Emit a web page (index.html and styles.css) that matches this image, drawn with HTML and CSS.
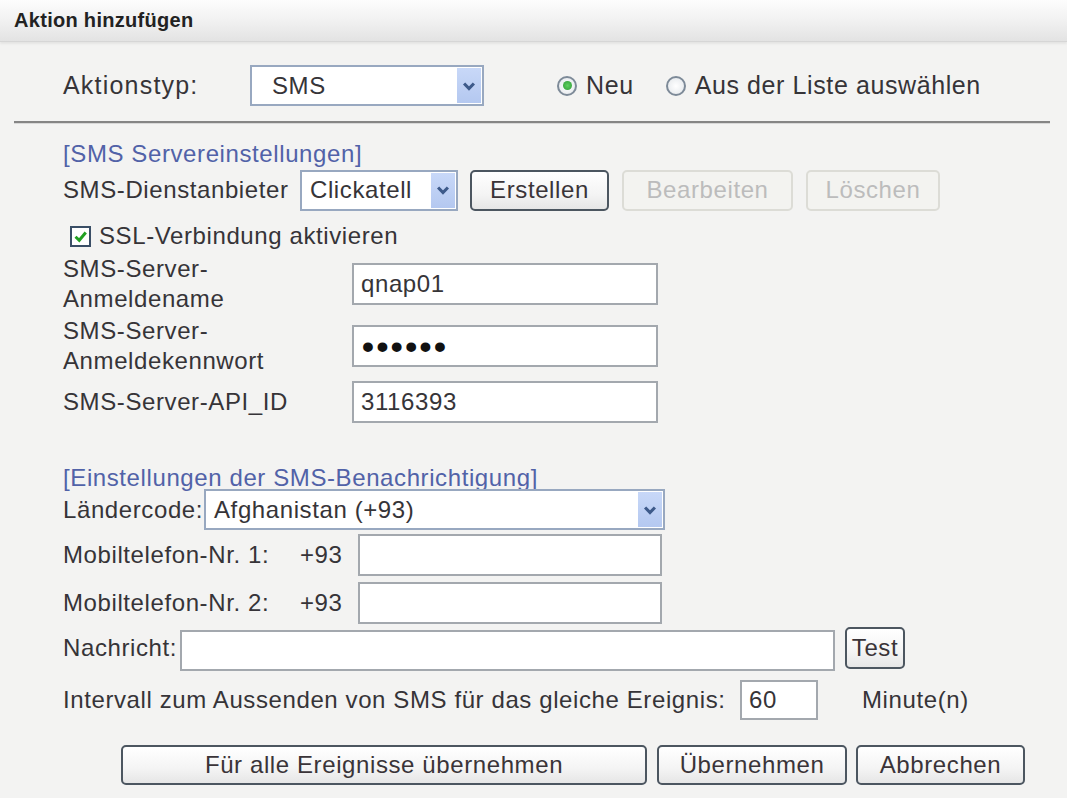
FILE: index.html
```html
<!DOCTYPE html>
<html lang="de">
<head>
<meta charset="utf-8">
<title>Aktion hinzufügen</title>
<link rel="stylesheet" href="styles.css">
</head>
<body>
<div class="header">Aktion hinzufügen</div>
<div class="panel">
  <div class="inner">
    <div class="row row-type">
      <span class="lbl-type">Aktionstyp:</span>
      <div class="select sel-type"><span class="sel-text">SMS</span><span class="sel-arrow"><svg viewBox="0 0 10 10" width="14" height="14"><path d="M1.5 3.2 L5 6.8 L8.5 3.2" fill="none" stroke="#3d5a8a" stroke-width="2.2"/></svg></span></div>
      <div class="radios">
        <span class="radio checked"></span><span class="radio-lbl">Neu</span>
        <span class="radio"></span><span class="radio-lbl">Aus der Liste auswählen</span>
      </div>
    </div>
  </div>
  <div class="hr"></div>
  <div class="inner">
    <div class="section-title t1">[SMS Servereinstellungen]</div>
    <div class="row row-prov">
      <span class="lbl-prov">SMS-Dienstanbieter</span>
      <div class="select sel-prov"><span class="sel-text">Clickatell</span><span class="sel-arrow"><svg viewBox="0 0 10 10" width="14" height="14"><path d="M1.5 3.2 L5 6.8 L8.5 3.2" fill="none" stroke="#3d5a8a" stroke-width="2.2"/></svg></span></div>
      <button class="btn b-create">Erstellen</button>
      <button class="btn disabled b-edit">Bearbeiten</button>
      <button class="btn disabled b-del">Löschen</button>
    </div>
    <div class="row row-ssl">
      <span class="check"><svg viewBox="0 0 12 12" width="15" height="15"><path d="M2 6.2 L5 9 L10.2 2.8" fill="none" stroke="#22a022" stroke-width="2.4"/></svg></span>
      <span>SSL-Verbindung aktivieren</span>
    </div>
    <div class="field f1">
      <span class="flbl">SMS-Server-<br>Anmeldename</span>
      <div class="input">qnap01</div>
    </div>
    <div class="field f2">
      <span class="flbl">SMS-Server-<br>Anmeldekennwort</span>
      <div class="input pw">••••••</div>
    </div>
    <div class="field f3">
      <span class="flbl">SMS-Server-API_ID</span>
      <div class="input">3116393</div>
    </div>

    <div class="section-title t2">[Einstellungen der SMS-Benachrichtigung]</div>
    <div class="row row-country">
      <span class="lbl-country">Ländercode:</span>
      <div class="select sel-country"><span class="sel-text">Afghanistan (+93)</span><span class="sel-arrow"><svg viewBox="0 0 10 10" width="14" height="14"><path d="M1.5 3.2 L5 6.8 L8.5 3.2" fill="none" stroke="#3d5a8a" stroke-width="2.2"/></svg></span></div>
    </div>
    <div class="row row-mob m1">
      <span class="lbl-mob">Mobiltelefon-Nr. 1:</span>
      <span class="prefix">+93</span>
      <div class="input in-mob"></div>
    </div>
    <div class="row row-mob m2">
      <span class="lbl-mob">Mobiltelefon-Nr. 2:</span>
      <span class="prefix">+93</span>
      <div class="input in-mob"></div>
    </div>
    <div class="row row-msg">
      <span class="lbl-msg">Nachricht:</span>
      <div class="input in-msg"></div>
      <button class="btn b-test">Test</button>
    </div>
    <div class="row row-int">
      <span class="lbl-int">Intervall zum Aussenden von SMS für das gleiche Ereignis:</span>
      <div class="input in-int">60</div>
      <span class="unit">Minute(n)</span>
    </div>
  </div>
  <div class="actions">
    <button class="btn b-all">Für alle Ereignisse übernehmen</button>
    <button class="btn b-apply">Übernehmen</button>
    <button class="btn b-cancel">Abbrechen</button>
  </div>
</div>
</body>
</html>
```

FILE: styles.css
```css
html, body {
  margin: 0;
  padding: 0;
}
body {
  background: #f3f3f2;
  font-family: "Liberation Sans", Arial, sans-serif;
  font-size: 24px;
  letter-spacing: 0.6px;
  color: #363438;
  width: 1067px;
  height: 798px;
  overflow: hidden;
}
.header {
  height: 42px;
  line-height: 40px;
  padding-left: 14px;
  font-weight: bold;
  font-size: 20px;
  letter-spacing: 0.3px;
  color: #222;
  background: linear-gradient(#fdfdfd, #f1f1f1 50%, #e3e3e3);
  border-bottom: 1px solid #d6d6d6;
  box-shadow: 0 2px 2px rgba(0,0,0,0.06);
  box-sizing: border-box;
}
.panel {
  padding: 0 17px 0 14px;
}
.inner {
  padding-left: 49px;
}
.row {
  display: flex;
  align-items: center;
}
.row-type {
  margin-top: 23px;
  height: 41px;
}
.lbl-type {
  width: 187px;
  font-size: 25px;
  letter-spacing: 1.2px;
}
.select {
  display: flex;
  align-items: stretch;
  box-sizing: border-box;
  background: #fff;
  border: 2px solid #98a8c0;
  height: 41px;
}
.sel-text {
  flex: 1;
  display: flex;
  align-items: center;
  white-space: nowrap;
}
.sel-arrow {
  width: 24px;
  margin: 1px;
  background: linear-gradient(#c8d8f8, #b4c8f0);
  display: flex;
  align-items: center;
  justify-content: center;
}
.sel-type {
  width: 234px;
}
.sel-type .sel-text {
  padding-left: 20px;
}
.radios {
  display: flex;
  align-items: center;
  margin-left: 73px;
  font-size: 25px;
}
.radio {
  width: 16px;
  height: 16px;
  border: 2px solid #7d8a98;
  border-radius: 50%;
  background: radial-gradient(#ffffff, #e2e6ea);
  position: relative;
  margin-right: 9px;
}
.radio.checked::after {
  content: "";
  position: absolute;
  left: 3.5px;
  top: 3.5px;
  width: 9px;
  height: 9px;
  border-radius: 50%;
  background: radial-gradient(#5fd05f, #2e9a36);
}
.radio-lbl {
  margin-right: 32px;
}
.hr {
  margin-top: 15px;
  height: 2px;
  background: #858585;
  border-bottom: 1px solid #d8d8d8;
}
.section-title {
  color: #5162a8;
  height: 26px;
  line-height: 26px;
}
.t1 {
  margin-top: 17px;
}
.row-prov {
  height: 42px;
  margin-top: 2px;
}
.lbl-prov {
  width: 237px;
}
.sel-prov {
  width: 158px;
}
.sel-prov .sel-text {
  padding-left: 8px;
}
.btn {
  font-family: "Liberation Sans", Arial, sans-serif;
  font-size: 24px;
  letter-spacing: 0.6px;
  color: #3a3438;
  height: 41px;
  box-sizing: border-box;
  border: 2px solid #4c5660;
  border-radius: 5px;
  background: linear-gradient(#ffffff, #f4f4f4 60%, #e6e6e6);
  padding: 0;
  margin: 0;
}
.btn.disabled {
  border-color: #dcdcd6;
  color: #bcbcbc;
  background: #f3f3f0;
}
.b-create {
  width: 139px;
  margin-left: 12px;
}
.b-edit {
  width: 171px;
  margin-left: 13px;
}
.b-del {
  width: 134px;
  margin-left: 13px;
}
.row-ssl {
  height: 26px;
  margin-top: 12px;
}
.check {
  width: 17px;
  height: 17px;
  border: 2px solid #3a4e66;
  background: #fff;
  margin-left: 7px;
  margin-right: 8px;
  display: flex;
  align-items: center;
  justify-content: center;
}
.field {
  display: flex;
  align-items: center;
}
.flbl {
  width: 289px;
  line-height: 30px;
}
.input {
  box-sizing: border-box;
  width: 306px;
  height: 42px;
  background: #fff;
  border: 2px solid #a3a8ae;
  padding-left: 7px;
  display: flex;
  align-items: center;
}
.pw {
  font-size: 34px;
  font-weight: bold;
  letter-spacing: 2.5px;
  color: #111;
  padding-left: 8px;
}
.f1 {
  margin-top: 5px;
  height: 60px;
}
.f2 {
  margin-top: 2px;
  height: 60px;
}
.f3 {
  margin-top: 5px;
  height: 42px;
}
.t2 {
  margin-top: 44px;
  height: 22px;
  line-height: 22px;
}
.row-country {
  height: 41px;
}
.lbl-country {
  width: 141px;
}
.sel-country {
  width: 461px;
}
.sel-country .sel-text {
  padding-left: 8px;
}
.row-mob {
  height: 42px;
}
.m1 {
  margin-top: 4px;
}
.m2 {
  margin-top: 6px;
}
.lbl-mob {
  width: 237px;
}
.prefix {
  width: 58px;
}
.in-mob {
  width: 304px;
}
.row-msg {
  margin-top: 3px;
  height: 42px;
}
.lbl-msg {
  width: 117px;
  white-space: nowrap;
}
.in-msg {
  width: 655px;
  height: 41px;
  margin-top: 4px;
}
.b-test {
  width: 60px;
  height: 42px;
  margin-left: 10px;
}
.row-int {
  margin-top: 11px;
  height: 40px;
}
.lbl-int {
  width: 677px;
  white-space: nowrap;
}
.in-int {
  width: 78px;
  height: 40px;
  padding-left: 7px;
}
.unit {
  margin-left: 44px;
}
.actions {
  display: flex;
  margin-top: 25px;
  padding-left: 107px;
}
.b-all {
  width: 526px;
  height: 40px;
}
.b-apply {
  width: 190px;
  height: 40px;
  margin-left: 10px;
}
.b-cancel {
  width: 169px;
  height: 40px;
  margin-left: 9px;
}
```
